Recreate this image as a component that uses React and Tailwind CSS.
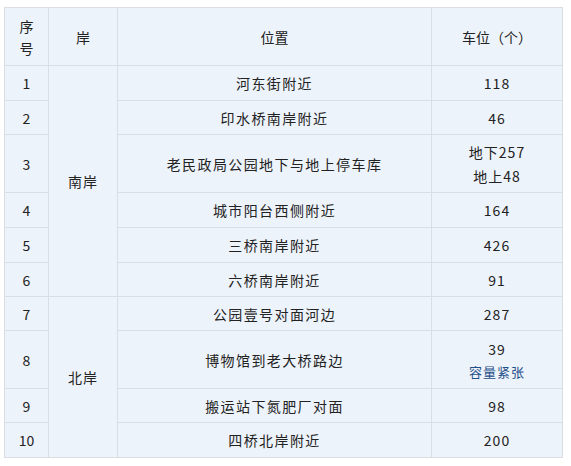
const rows = [
  { no: "1", place: "河东街附近", count: ["118"], h: "h-[35px]" },
  { no: "2", place: "印水桥南岸附近", count: ["46"], h: "h-[34px]" },
  { no: "3", place: "老民政局公园地下与地上停车库", count: ["地下257", "地上48"], h: "h-[58px]" },
  { no: "4", place: "城市阳台西侧附近", count: ["164"], h: "h-[35px]" },
  { no: "5", place: "三桥南岸附近", count: ["426"], h: "h-[35px]" },
  { no: "6", place: "六桥南岸附近", count: ["91"], h: "h-[34px]" },
  { no: "7", place: "公园壹号对面河边", count: ["287"], h: "h-[34px]" },
  { no: "8", place: "博物馆到老大桥路边", count: ["39"], note: "容量紧张", h: "h-[58px]" },
  { no: "9", place: "搬运站下氮肥厂对面", count: ["98"], h: "h-[34px]" },
  { no: "10", place: "四桥北岸附近", count: ["200"], h: "h-[35px]" },
];

const cell = "border border-[#dadde2] bg-[#edf3fa] text-center align-middle p-0";

export default function App() {
  return (
    <div className="bg-white min-h-screen pt-[7px] pl-[4px] text-[#222] text-[14px] leading-[24px] font-['Noto_Sans_CJK_SC','Noto_Sans',sans-serif]">
      <table className="table-fixed border-collapse w-[558px]">
        <colgroup>
          <col className="w-[44px]" />
          <col className="w-[69px]" />
          <col className="w-[314px]" />
          <col className="w-[131px]" />
        </colgroup>
        <thead>
          <tr>
            <th className={`${cell} h-[58px] font-normal leading-[22px] px-[12px]`}>序号</th>
            <th className={`${cell} font-normal`}>岸</th>
            <th className={`${cell} font-normal`}>位置</th>
            <th className={`${cell} font-normal`}>车位（个）</th>
          </tr>
        </thead>
        <tbody>
          {rows.map((r, i) => (
            <tr key={r.no}>
              <td className={`${cell} ${r.h}`}>{r.no}</td>
              {i === 0 && (
                <td rowSpan={6} className={`${cell} tracking-[1px]`}>南岸</td>
              )}
              {i === 6 && (
                <td rowSpan={4} className={`${cell} tracking-[1px]`}>北岸</td>
              )}
              <td className={`${cell} tracking-[1.4px]`}>{r.place}</td>
              <td className={`${cell} tracking-[1px]`}>
                {r.count.map((c) => (
                  <div key={c}>{c}</div>
                ))}
                {r.note && (
                  <div className="text-[13px] text-[#1f4f8a] leading-[22px]">{r.note}</div>
                )}
              </td>
            </tr>
          ))}
        </tbody>
      </table>
    </div>
  );
}
